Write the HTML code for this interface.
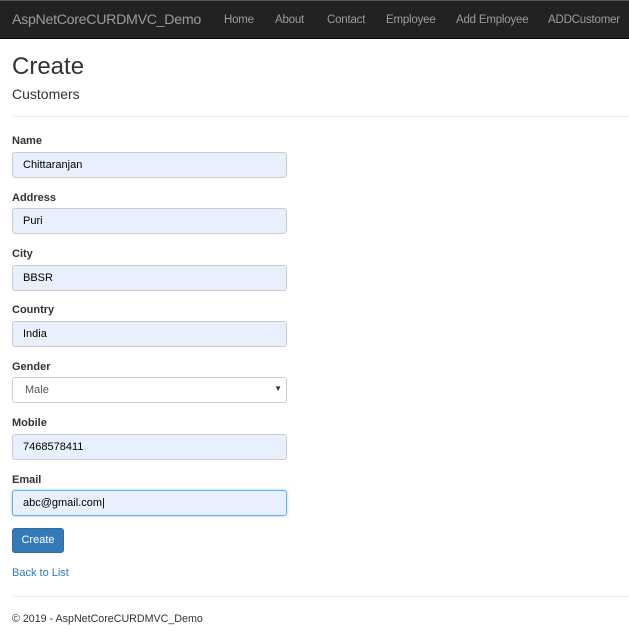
<!DOCTYPE html>
<html><head><style>
body{margin:0;width:629px;height:633px;background:#fff;font-family:"Liberation Sans",Arial,sans-serif;position:relative;overflow:hidden;color:#333}
.nav{position:absolute;left:0;top:0;width:629px;height:39px;background:#222;border-top:1px solid #555;border-bottom:1px solid #080808;box-sizing:border-box}
.nav span{position:absolute;top:13px;font-size:11.5px;color:#9d9d9d;letter-spacing:-0.2px}
.brand{font-size:14.2px!important;top:11px!important;letter-spacing:-0.3px!important}
.a{position:absolute}
h1{position:absolute;left:12px;top:53px;margin:0;font-size:24px;font-weight:normal;color:#333}
h2{position:absolute;left:12px;top:86px;margin:0;font-size:14px;font-weight:normal}
.hr{position:absolute;left:12px;width:617px;height:1px;background:#eee}
label{position:absolute;left:12px;font-size:11px;font-weight:bold;color:#333}
.in{position:absolute;left:12px;width:275px;height:26px;box-sizing:border-box;border:1px solid #ccc;border-radius:3px;background:#e8f0fe;font-size:11px;padding:6px 10px;color:#000}
</style></head><body>
<div class="nav">
<span class="brand" style="left:12px">AspNetCoreCURDMVC_Demo</span>
<span style="left:224px">Home</span>
<span style="left:275px">About</span>
<span style="left:327px">Contact</span>
<span style="left:386px">Employee</span>
<span style="left:456px">Add Employee</span>
<span style="left:548px">ADDCustomer</span>
</div>
<h1>Create</h1>
<h2>Customers</h2>
<div class="hr" style="top:116px"></div>
<label style="top:135px">Name</label><div class="in" style="top:152px">Chittaranjan</div>
<label style="top:192px">Address</label><div class="in" style="top:208px">Puri</div>
<label style="top:248px">City</label><div class="in" style="top:265px">BBSR</div>
<label style="top:304px">Country</label><div class="in" style="top:321px">India</div>
<label style="top:361px">Gender</label><div class="in" style="top:377px;background:#fff;color:#555;padding-left:12px">Male<span style="position:absolute;right:4px;top:6px;font-size:8px;color:#333">▼</span></div>
<label style="top:417px">Mobile</label><div class="in" style="top:434px">7468578411</div>
<label style="top:474px">Email</label><div class="in" style="top:490px;border-color:#66afe9;box-shadow:0 0 3px rgba(102,175,233,.6)">abc@gmail.com|</div>
<div class="a" style="left:12px;top:528px;width:52px;height:25px;background:#337ab7;border:1px solid #2e6da4;border-radius:3px;box-sizing:border-box;color:#fff;font-size:11px;text-align:center;line-height:23px">Create</div>
<div class="a" style="left:12px;top:567px;font-size:11px;color:#337ab7">Back to List</div>
<div class="hr" style="top:596px"></div>
<div class="a" style="left:12px;top:613px;font-size:10.7px;color:#333">© 2019 - AspNetCoreCURDMVC_Demo</div>
</body></html>
